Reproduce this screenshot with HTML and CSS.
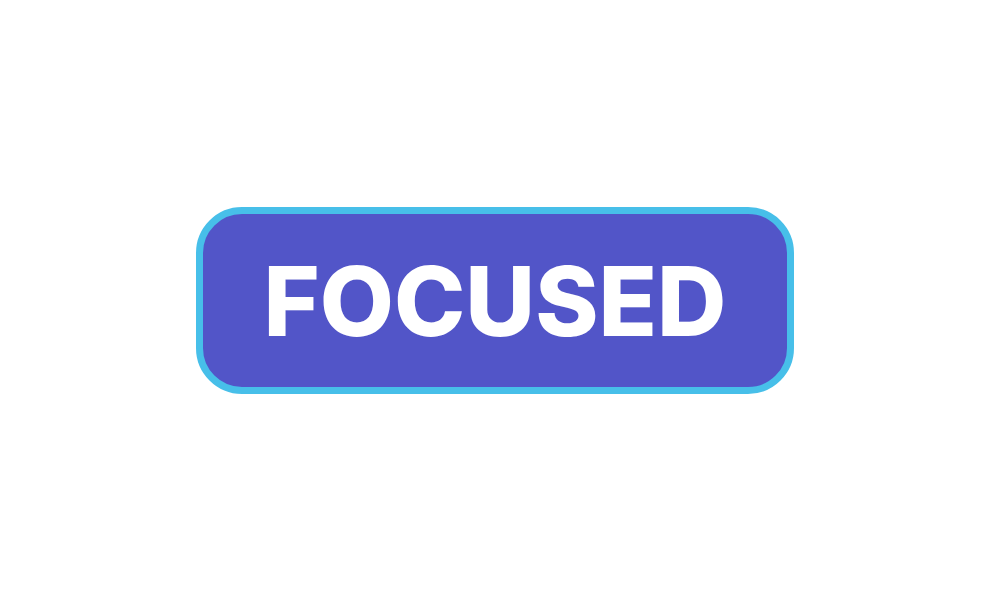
FILE: index.html
```html
<!DOCTYPE html>
<html>
<head>
<meta charset="utf-8">
<link rel="stylesheet" href="styles.css">
</head>
<body>
<div class="stage">
  <button class="btn">FOCUSED</button>
</div>
</body>
</html>
```
FILE: styles.css
```css
html, body {
  margin: 0;
  padding: 0;
  background: #ffffff;
}
.stage {
  width: 990px;
  height: 600px;
  display: flex;
  align-items: center;
  justify-content: center;
}
.btn {
  font-family: Inter, "Noto Sans", sans-serif;
  font-weight: 800;
  font-size: 96px;
  line-height: 116px;
  color: #ffffff;
  background: #5255c8;
  border: 7px solid #47bfe9;
  border-radius: 46px;
  padding: 29px 61px 28px;
  margin: 0;
  cursor: pointer;
}
```
